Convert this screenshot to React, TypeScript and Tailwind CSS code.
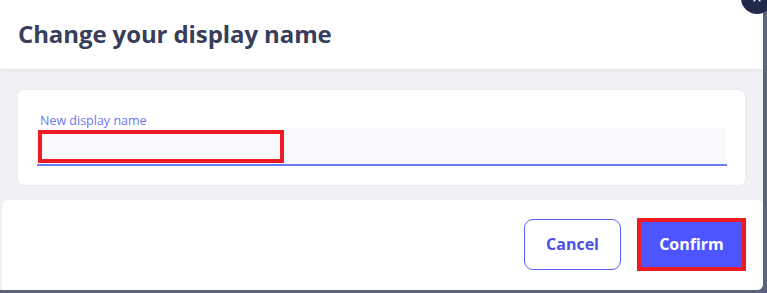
import React from 'react';
import { X } from 'lucide-react';

export default function App(): React.ReactElement {
  return (
    <div className="relative w-[767px] h-[293px] bg-[#5c6277] overflow-hidden font-['Open_Sans',sans-serif]">
      <div className="w-[763px] h-[290px] bg-[#f0f1f5] flex flex-col rounded-br-[6px] overflow-hidden">
        <header className="h-[70px] bg-white border-b border-[#e6e7ee] shadow-[0_1px_3px_rgba(0,0,0,0.04)] flex items-center px-[18px]">
          <h1 className="text-[24px] font-bold text-[#383e5a] tracking-[-0.1px] leading-none pb-[1px]">Change your display name</h1>
        </header>

        <div className="px-[18px] pt-[20px] pb-[15px]">
          <div className="bg-white rounded-[6px] h-[95px] pl-[19px] pr-[18px] pt-[23px] shadow-[0_0_2px_rgba(0,0,0,0.05)]">
            <label className="block text-[12.5px] leading-[15px] text-[#6c74f5] pl-[3px]">New display name</label>
            <div className="relative h-[38px] bg-[#f9f9fe] border-b-2 border-[#6d7bf9]">
              <div className="absolute left-[1px] top-[2px] w-[246px] h-[33px] border-[4px] border-[#ed1c24]" />
              <input className="w-full h-full bg-transparent outline-none px-2" aria-label="New display name" />
            </div>
          </div>
        </div>

        <footer className="flex-1 ml-[2px] bg-white rounded-t-[6px] flex items-center justify-end gap-[16px] pr-[17px] pb-[2px]">
          <button className="w-[97px] h-[51px] rounded-[9px] border border-[#5b61f0] text-[#4a50e6] text-[16px] font-bold bg-white">
            Cancel
          </button>
          <div className="border-[4px] border-[#ed1c24]">
            <button className="w-[101px] h-[45px] bg-[#4c55ff] text-white text-[16px] font-bold">
              Confirm
            </button>
          </div>
        </footer>
      </div>

      <button className="absolute -top-[18px] left-[741px] w-[32px] h-[32px] rounded-full bg-[#23294a] flex items-center justify-center text-white">
        <X size={12} strokeWidth={2.5} />
      </button>
    </div>
  );
}
